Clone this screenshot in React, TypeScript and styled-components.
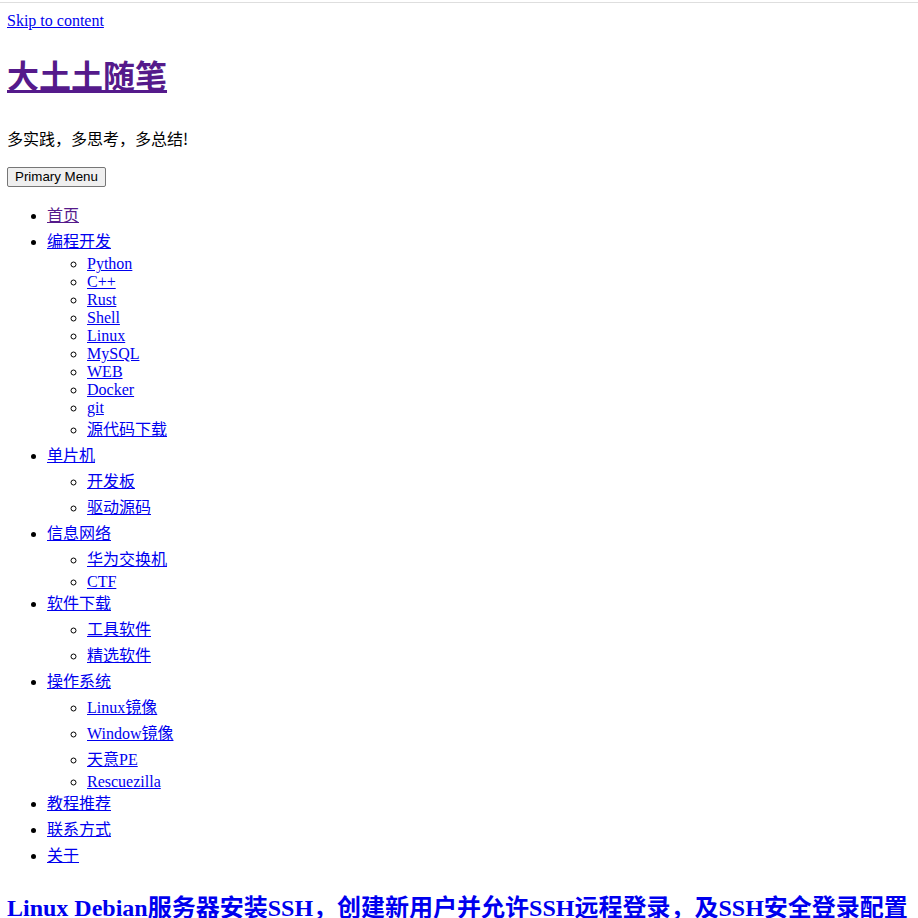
import styled, { createGlobalStyle } from 'styled-components'

const CJK_LINE = 1.625

const GlobalStyle = createGlobalStyle`
  html {
    padding-top: 4px;
    background: linear-gradient(#fff 0 2px, #dedede 2px 3px, #fff 3px) no-repeat;
  }

  body {
    margin: 8px 8px 8px 7px;
    color: #000;
    font-family: 'Liberation Serif', 'Noto Sans CJK SC', serif;
    font-size: 16px;
  }

  a {
    color: #0000ee;
  }
`

const SkipLink = styled.a`
  display: inline-block;
`

const SiteTitle = styled.h1`
  font-size: 2em;
  line-height: ${CJK_LINE};
  margin: 0.67em 0;

  a {
    color: #551a8b;
  }
`

const Tagline = styled.p`
  font-family: 'Noto Sans CJK SC', sans-serif;
  line-height: ${CJK_LINE};
  margin: 1em 0;
`

const MenuButton = styled.button`
  display: block;
  font-family: 'Liberation Sans', sans-serif;
  font-size: 13.33px;
  line-height: 16px;
  padding: 1px 7px;
  border: 1px solid #767676;
  border-radius: 2px;
  background: #efefef;
  color: #000;
`

const MenuList = styled.ul`
  list-style: disc;
  padding-left: 40px;
  margin: 1em 0;
`

const SubMenu = styled.ul`
  list-style: circle;
  padding-left: 40px;
  margin: 0;
`

const MenuItemRow = styled.li<{ $cjk: boolean }>`
  line-height: ${p => (p.$cjk ? CJK_LINE : 'normal')};
`

const MenuLink = styled.a<{ $visited?: boolean }>`
  color: ${p => (p.$visited === true ? '#551a8b' : '#0000ee')};
`

const EntryTitle = styled.h2`
  font-size: 1.5em;
  line-height: ${CJK_LINE};
  margin: 0.83em 0;
  white-space: nowrap;

  a {
    color: #0000ee;
  }
`

interface MenuItem {
  label: string
  visited?: boolean
  children?: string[]
}

const menu: MenuItem[] = [
  { label: '首页', visited: true },
  {
    label: '编程开发',
    children: ['Python', 'C++', 'Rust', 'Shell', 'Linux', 'MySQL', 'WEB', 'Docker', 'git', '源代码下载']
  },
  { label: '单片机', children: ['开发板', '驱动源码'] },
  { label: '信息网络', children: ['华为交换机', 'CTF'] },
  { label: '软件下载', children: ['工具软件', '精选软件'] },
  { label: '操作系统', children: ['Linux镜像', 'Window镜像', '天意PE', 'Rescuezilla'] },
  { label: '教程推荐' },
  { label: '联系方式' },
  { label: '关于' }
]

const hasCjk = (text: string): boolean => /[\u3000-\u9fff\uff00-\uffef]/.test(text)

function App (): JSX.Element {
  return (
    <>
      <GlobalStyle />
      <header>
        <SkipLink href='#content'>Skip to content</SkipLink>
        <SiteTitle><a href='#'>大土土随笔</a></SiteTitle>
        <Tagline>多实践，多思考，多总结!</Tagline>
        <nav>
          <MenuButton>Primary Menu</MenuButton>
          <MenuList>
            {menu.map(item => (
              <MenuItemRow key={item.label} $cjk={hasCjk(item.label)}>
                <MenuLink href='#' $visited={item.visited}>{item.label}</MenuLink>
                {item.children != null && (
                  <SubMenu>
                    {item.children.map(child => (
                      <MenuItemRow key={child} $cjk={hasCjk(child)}>
                        <MenuLink href='#'>{child}</MenuLink>
                      </MenuItemRow>
                    ))}
                  </SubMenu>
                )}
              </MenuItemRow>
            ))}
          </MenuList>
        </nav>
      </header>
      <main id='content'>
        <EntryTitle>
          <a href='#'>Linux Debian服务器安装SSH，创建新用户并允许SSH远程登录，及SSH安全登录配置</a>
        </EntryTitle>
      </main>
    </>
  )
}

export default App
